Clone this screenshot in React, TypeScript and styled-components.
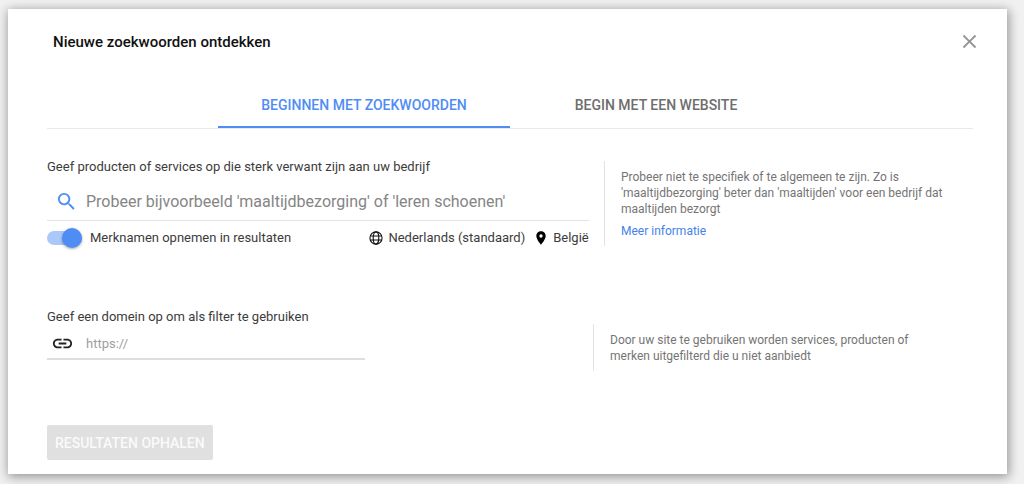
import React, { useState } from "react";
import styled, { createGlobalStyle } from "styled-components";

const GlobalStyle = createGlobalStyle`
  *, *::before, *::after { box-sizing: border-box; }
  body {
    margin: 0;
    background: #f1f1f1;
    color: #3c3c3c;
    font-family: Roboto, "Liberation Sans", sans-serif;
    font-size: 12px;
    line-height: 16px;
  }
  button, input { font: inherit; }
`;

const Page = styled.div`
  padding: 9px 17px 10px 8px;
`;

const Dialog = styled.main`
  background: #fff;
  padding: 20px 34px 14px 39px;
  box-shadow: 1px 2px 10px 1px rgba(0, 0, 0, 0.38);
`;

const Header = styled.header`
  display: flex;
  align-items: center;
  justify-content: space-between;
  height: 24px;
  padding: 0 0 0 6px;
`;

const Title = styled.h1`
  margin: 2px 0 0;
  color: #111;
  font-size: 15px;
  font-weight: 500;
  line-height: 24px;
`;

const CloseButton = styled.button`
  display: flex;
  align-items: center;
  justify-content: center;
  width: 24px;
  height: 24px;
  margin-right: -8px;
  padding: 0;
  border: 0;
  background: none;
  color: #949494;
  cursor: pointer;
`;

const Tabs = styled.div`
  display: flex;
  justify-content: center;
  margin-top: 28px;
  border-bottom: 1px solid #e9e9e9;
`;

const Tab = styled.button<{ $active: boolean }>`
  width: 292px;
  height: 47px;
  padding: 2px 0 0;
  border: 0;
  border-bottom: 2px solid ${(p) => (p.$active ? "#4f8df5" : "transparent")};
  background: none;
  color: ${(p) => (p.$active ? "#4f8df5" : "#6e6e6e")};
  font-size: 14px;
  font-weight: 500;
  text-transform: uppercase;
  cursor: pointer;
`;

const Row = styled.section<{ $gap: number; $top: number }>`
  display: flex;
  justify-content: space-between;
  gap: ${(p) => p.$gap}px;
  margin-top: ${(p) => p.$top}px;
`;

const Fields = styled.div<{ $basis: string }>`
  flex: 0 0 ${(p) => p.$basis};
  min-width: 0;
`;

const Label = styled.label`
  display: block;
  font-size: 13px;
`;

const InputLine = styled.div<{ $large?: boolean }>`
  display: flex;
  align-items: center;
  height: ${(p) => (p.$large ? 46 : 35)}px;
  padding: ${(p) => (p.$large ? "8px 0 0 8px" : "4px 0 0 4px")};
  border-bottom: ${(p) => (p.$large ? "1px solid #e2e2e2" : "2px solid #dedede")};
`;

const TextInput = styled.input<{ $large?: boolean }>`
  flex: 1;
  min-width: 0;
  margin-left: ${(p) => (p.$large ? 8 : 12)}px;
  padding: 0;
  border: 0;
  outline: 0;
  background: none;
  color: #3c3c3c;
  font-size: ${(p) => (p.$large ? 16 : 13)}px;

  &::placeholder {
    color: ${(p) => (p.$large ? "#858585" : "#9e9e9e")};
    opacity: 1;
  }
`;

const Options = styled.div`
  display: flex;
  align-items: center;
  justify-content: space-between;
  height: 34px;
`;

const SwitchLabel = styled.label`
  display: flex;
  align-items: center;
  gap: 8px;
  font-size: 13px;
  cursor: pointer;
`;

const Switch = styled.input`
  appearance: none;
  display: flex;
  align-items: center;
  width: 35px;
  height: 14px;
  margin: 0;
  border-radius: 7px;
  background: #abc8fa;
  cursor: pointer;

  &::before {
    content: "";
    width: 20px;
    height: 20px;
    border-radius: 50%;
    background: #fafafa;
    box-shadow: 0 1px 3px rgba(0, 0, 0, 0.35);
  }

  &:not(:checked) { background: #c4c4c4; }

  &:checked { justify-content: flex-end; }

  &:checked::before { background: #4f8df5; }
`;

const Targeting = styled.div`
  display: flex;
  gap: 8px;
`;

const TargetButton = styled.button`
  display: flex;
  align-items: center;
  gap: 4px;
  padding: 0;
  border: 0;
  background: none;
  color: #3c3c3c;
  font-size: 13px;
  cursor: pointer;
`;

const Help = styled.aside<{ $basis: string }>`
  flex: 0 1 ${(p) => p.$basis};
  align-self: flex-start;
  margin-top: 2px;
  padding: 8px 16px 7px;
  border-left: 1px solid #e2e2e2;
  color: #757575;
`;

const HelpText = styled.p`
  margin: 0;
`;

const MoreLink = styled.a`
  display: inline-block;
  margin-top: 6px;
  color: #4582ec;
  text-decoration: none;
`;

const DomainHelp = styled(Help)`
  margin-top: 15px;
  padding-right: 40px;
`;

const SubmitButton = styled.button`
  display: block;
  height: 35px;
  margin-top: 54px;
  padding: 0 8px;
  border: 0;
  border-radius: 2px;
  background: #e0e0e0;
  color: #fafafa;
  font-size: 14px;
  font-weight: 500;
  text-transform: uppercase;
`;

const Icon = ({ size, path, color }: { size: number; path: string; color: string }) => (
  <svg width={size} height={size} viewBox="0 0 24 24" fill={color} aria-hidden="true">
    <path d={path} />
  </svg>
);

const GlobeIcon = () => (
  <svg width={16} height={16} viewBox="0 0 16 16" fill="none" stroke="#111" strokeWidth="1.1" aria-hidden="true">
    <circle cx="8" cy="8" r="6.1" />
    <ellipse cx="8" cy="8" rx="2.8" ry="6.1" />
    <path d="M2.3 6h11.4M2.3 10h11.4" />
  </svg>
);

const paths = {
  close:
    "M19 6.41L17.59 5 12 10.59 6.41 5 5 6.41 10.59 12 5 17.59 6.41 19 12 13.41 17.59 19 19 17.59 13.41 12z",
  search:
    "M15.5 14h-.79l-.28-.27A6.47 6.47 0 0 0 16 9.5 6.5 6.5 0 1 0 9.5 16c1.61 0 3.09-.59 4.23-1.57l.27.28v.79l5 4.99L20.49 19l-4.99-5zm-6 0C7.01 14 5 11.99 5 9.5S7.01 5 9.5 5 14 7.01 14 9.5 11.99 14 9.5 14z",
  place:
    "M12 2C8.13 2 5 5.13 5 9c0 5.25 7 13 7 13s7-7.75 7-13c0-3.87-3.13-7-7-7zm0 9.5a2.5 2.5 0 1 1 0-5 2.5 2.5 0 0 1 0 5z",
  link:
    "M3.9 12c0-1.71 1.39-3.1 3.1-3.1h4V7H7c-2.76 0-5 2.24-5 5s2.24 5 5 5h4v-1.9H7c-1.71 0-3.1-1.39-3.1-3.1zM8 13h8v-2H8v2zm9-6h-4v1.9h4c1.71 0 3.1 1.39 3.1 3.1s-1.39 3.1-3.1 3.1h-4V17h4c2.76 0 5-2.24 5-5s-2.24-5-5-5z",
};

export default function App() {
  const [tab, setTab] = useState(0);
  const tabs = ["Beginnen met zoekwoorden", "Begin met een website"];

  return (
    <Page>
      <GlobalStyle />
      <Dialog>
        <Header>
          <Title>Nieuwe zoekwoorden ontdekken</Title>
          <CloseButton type="button" aria-label="Sluiten">
            <Icon size={23} path={paths.close} color="currentColor" />
          </CloseButton>
        </Header>

        <Tabs role="tablist">
          {tabs.map((name, i) => (
            <Tab key={name} type="button" role="tab" aria-selected={tab === i} $active={tab === i} onClick={() => setTab(i)}>
              {name}
            </Tab>
          ))}
        </Tabs>

        <Row $gap={15} $top={30}>
          <Fields $basis="58.5%">
            <Label htmlFor="keywords">Geef producten of services op die sterk verwant zijn aan uw bedrijf</Label>
            <InputLine $large>
              <Icon size={23} path={paths.search} color="#4f8df5" />
              <TextInput $large id="keywords" placeholder="Probeer bijvoorbeeld 'maaltijdbezorging' of 'leren schoenen'" />
            </InputLine>
            <Options>
              <SwitchLabel>
                <Switch type="checkbox" role="switch" defaultChecked />
                Merknamen opnemen in resultaten
              </SwitchLabel>
              <Targeting>
                <TargetButton type="button">
                  <GlobeIcon />
                  Nederlands (standaard)
                </TargetButton>
                <TargetButton type="button">
                  <Icon size={16} path={paths.place} color="#000" />
                  België
                </TargetButton>
              </Targeting>
            </Options>
          </Fields>
          <Help $basis="369px">
            <HelpText>
              Probeer niet te specifiek of te algemeen te zijn. Zo is 'maaltijdbezorging' beter dan 'maaltijden' voor een
              bedrijf dat maaltijden bezorgt
            </HelpText>
            <MoreLink href="#">Meer informatie</MoreLink>
          </Help>
        </Row>

        <Row $gap={16} $top={54}>
          <Fields $basis="318px">
            <Label htmlFor="domain">Geef een domein op om als filter te gebruiken</Label>
            <InputLine>
              <Icon size={23} path={paths.link} color="#222" />
              <TextInput id="domain" type="url" placeholder="https://" />
            </InputLine>
          </Fields>
          <DomainHelp $basis="380px">
            <HelpText>
              Door uw site te gebruiken worden services, producten of merken uitgefilterd die u niet aanbiedt
            </HelpText>
          </DomainHelp>
        </Row>

        <SubmitButton type="button" disabled>
          Resultaten ophalen
        </SubmitButton>
      </Dialog>
    </Page>
  );
}
